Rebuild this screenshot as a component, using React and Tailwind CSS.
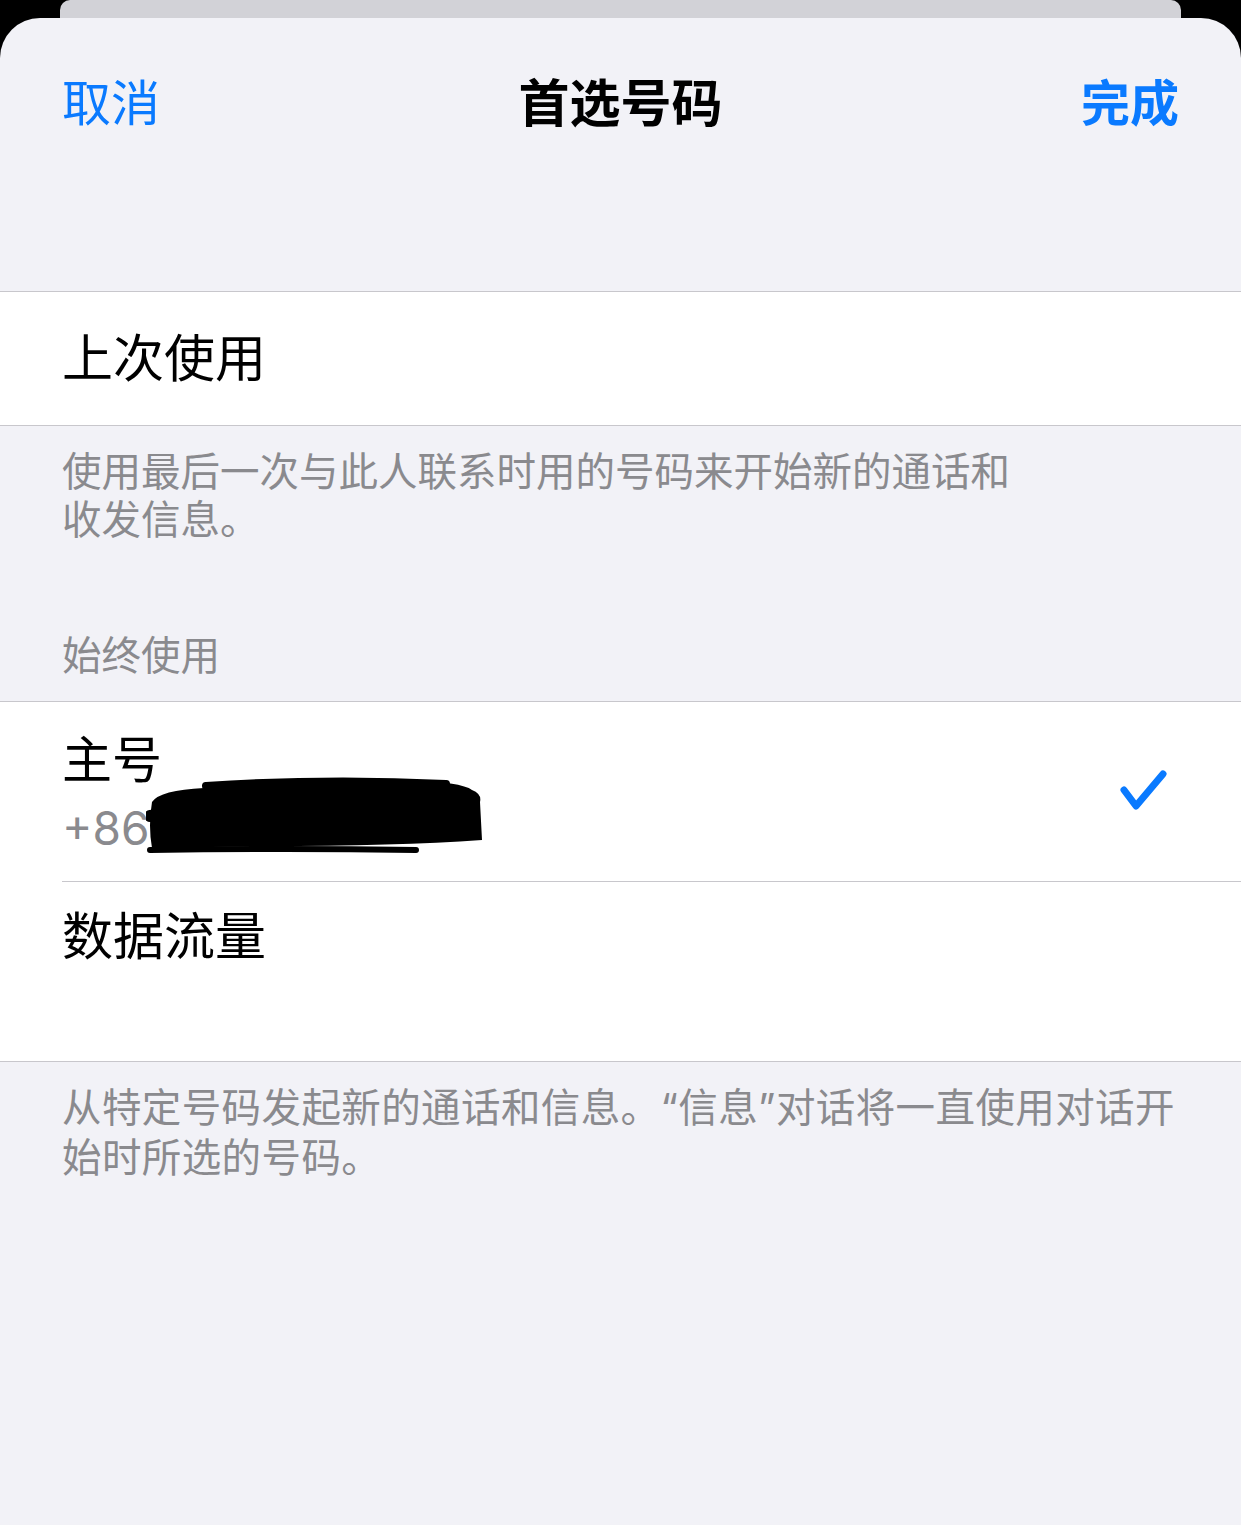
import React from 'react';

const FONT = { fontFamily: 'Inter, "Noto Sans CJK SC", sans-serif' };

function Scribble() {
  return (
    <svg
      className="absolute left-[146px] top-[74px] pointer-events-none"
      width="342"
      height="80"
      viewBox="0 0 342 80"
    >
      <path
        d="M58 10 Q160 2 260 4 Q316 6 326 14 Q336 18 334 26 L336 64 Q250 70 120 70 L6 72 Q2 50 6 26 Q14 14 58 12 Z"
        fill="#000"
      />
      <path d="M60 10 Q180 2 300 8" stroke="#000" strokeWidth="8" strokeLinecap="round" fill="none" />
      <path d="M4 74 Q140 72 270 74" stroke="#000" strokeWidth="6" strokeLinecap="round" fill="none" />
      <path d="M4 40 L40 36" stroke="#000" strokeWidth="12" strokeLinecap="round" fill="none" />
    </svg>
  );
}

function Check() {
  return (
    <svg width="52" height="48" viewBox="0 0 52 48" className="shrink-0">
      <polyline
        points="5,22 17,38 44,6"
        fill="none"
        stroke="#0a7aff"
        strokeWidth="7"
        strokeLinecap="round"
        strokeLinejoin="round"
      />
    </svg>
  );
}

export default function App() {
  return (
    <div className="bg-black w-[1241px] min-h-[1525px]" style={FONT}>
      {/* card behind the sheet */}
      <div className="h-[18px] px-[60px]">
        <div className="h-full bg-[#d2d2d7] rounded-t-[10px]" />
      </div>

      <div className="bg-[#f2f2f7] rounded-t-[40px] min-h-[1507px]">
        <nav className="h-[170px] px-[62px] grid grid-cols-3 items-center">
          <span className="text-[#0a7aff] text-[49px] leading-none">取消</span>
          <span className="text-center text-black text-[51px] font-bold leading-none">首选号码</span>
          <span className="text-right text-[#0a7aff] text-[49px] font-bold leading-none">完成</span>
        </nav>

        <section className="mt-[103px] bg-white border-y border-[#c8c7cc] h-[135px] flex items-center px-[62px]">
          <span className="text-[51px] text-black leading-none">上次使用</span>
        </section>

        <p className="px-[62px] pt-[22px] text-[39.5px] leading-[48px] text-[#8a8a8e] whitespace-nowrap">
          使用最后一次与此人联系时用的号码来开始新的通话和
          <br />
          收发信息。
        </p>

        <p className="px-[62px] mt-[88px] pb-[21px] text-[39.5px] leading-[48px] text-[#8a8a8e]">始终使用</p>

        <section className="bg-white border-y border-[#c8c7cc]">
          <div className="relative h-[179px] flex items-center justify-between pl-[62px] pr-[70px]">
            <div className="pt-[2px]">
              <div className="text-[50px] leading-[60px] text-black">主号</div>
              <div className="mt-[10px] text-[46px] leading-[56px] text-[#8a8a8e]">+86</div>
            </div>
            <Check />
            <Scribble />
          </div>
          <div className="ml-[62px] border-t border-[#c8c7cc] h-[180px] pt-[25px]">
            <div className="text-[51px] leading-[60px] text-black">数据流量</div>
          </div>
        </section>

        <p className="px-[62px] pt-[21px] text-[39.5px] leading-[50px] text-[#8a8a8e] whitespace-nowrap tracking-[0.4px]">
          从特定号码发起新的通话和信息。“信息”对话将一直使用对话开
          <br />
          始时所选的号码。
        </p>
      </div>
    </div>
  );
}
